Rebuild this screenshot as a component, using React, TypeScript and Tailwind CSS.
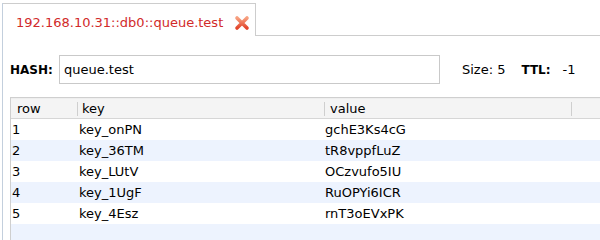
const TAB_TITLE = '192.168.10.31::db0::queue.test'

const ROWS = [
  { row: '1', key: 'key_onPN', value: 'gchE3Ks4cG' },
  { row: '2', key: 'key_36TM', value: 'tR8vppfLuZ' },
  { row: '3', key: 'key_LUtV', value: 'OCzvufo5IU' },
  { row: '4', key: 'key_1UgF', value: 'RuOPYi6ICR' },
  { row: '5', key: 'key_4Esz', value: 'rnT3oEVxPK' },
]

const CloseIcon = () => (
  <svg width="16" height="16" viewBox="0 0 16 16">
    <defs>
      <linearGradient id="xg" x1="0" y1="0" x2="0" y2="1">
        <stop offset="0" stopColor="#f7a07f" />
        <stop offset="1" stopColor="#e2452c" />
      </linearGradient>
    </defs>
    <path
      d="M3 3 L13 13 M13 3 L3 13"
      stroke="url(#xg)"
      strokeWidth="3.6"
      strokeLinecap="round"
    />
  </svg>
)

const App = () => {
  return (
    <div className="w-[600px] h-[240px] overflow-hidden bg-white pl-[2px] pt-[3px] font-['DejaVu_Sans',sans-serif] text-[13px] text-black">
      <div className="h-full border-l border-[#c3cfdd] flex flex-col">
        {/* tab bar */}
        <div className="flex h-[33px] shrink-0">
          <div className="w-[253px] border-t border-r border-[#cdcdcd] flex items-center pl-[13px] pr-[5px] pt-[5px]">
            <span className="text-[#d12a2a] flex-1">{TAB_TITLE}</span>
            <CloseIcon />
          </div>
          <div className="flex-1 border-b border-[#cdcdcd]" />
        </div>

        <div className="pl-[7px] pt-[19px] flex flex-col flex-1">
          {/* hash row */}
          <div className="flex items-center h-[29px]">
            <span className="font-bold text-[12px] w-[49px]">HASH:</span>
            <div className="w-[381px] h-[29px] border border-[#c9c9c9] flex items-center pl-[4px]">
              queue.test
            </div>
            <span className="ml-[22px]">Size: 5</span>
            <span className="ml-[16px] font-bold text-[12px]">TTL:</span>
            <span className="ml-[12px]">-1</span>
          </div>

          {/* table */}
          <div className="mt-[13px] flex-1 border-l border-t border-[#cfcfcf] bg-[#edf3fe]">
            <div className="flex h-[21px] bg-[#f4f4f4] border-b border-[#d6d6d6] border-t border-t-[#eeeeee]">
              <div className="w-[66px] pl-[6px] flex items-center">row</div>
              <div className="w-[247px] flex items-center">
                <span className="w-px h-[14px] bg-[#cfcfcf]" />
                <span className="pl-[4px]">key</span>
              </div>
              <div className="w-[247px] flex items-center">
                <span className="w-px h-[14px] bg-[#cfcfcf]" />
                <span className="pl-[5px]">value</span>
              </div>
              <div className="flex-1 flex items-center">
                <span className="w-px h-[14px] bg-[#cfcfcf]" />
              </div>
            </div>
            {ROWS.map((r, i) => (
              <div
                key={r.row}
                className={`flex h-[21px] items-center ${i % 2 === 0 ? 'bg-white' : 'bg-[#edf3fe]'}`}
              >
                <div className="w-[66px] pl-[1px]">{r.row}</div>
                <div className="w-[247px] pl-[2px]">{r.key}</div>
                <div className="w-[247px] pl-[1px]">{r.value}</div>
              </div>
            ))}
          </div>
        </div>
      </div>
    </div>
  )
}

export default App
